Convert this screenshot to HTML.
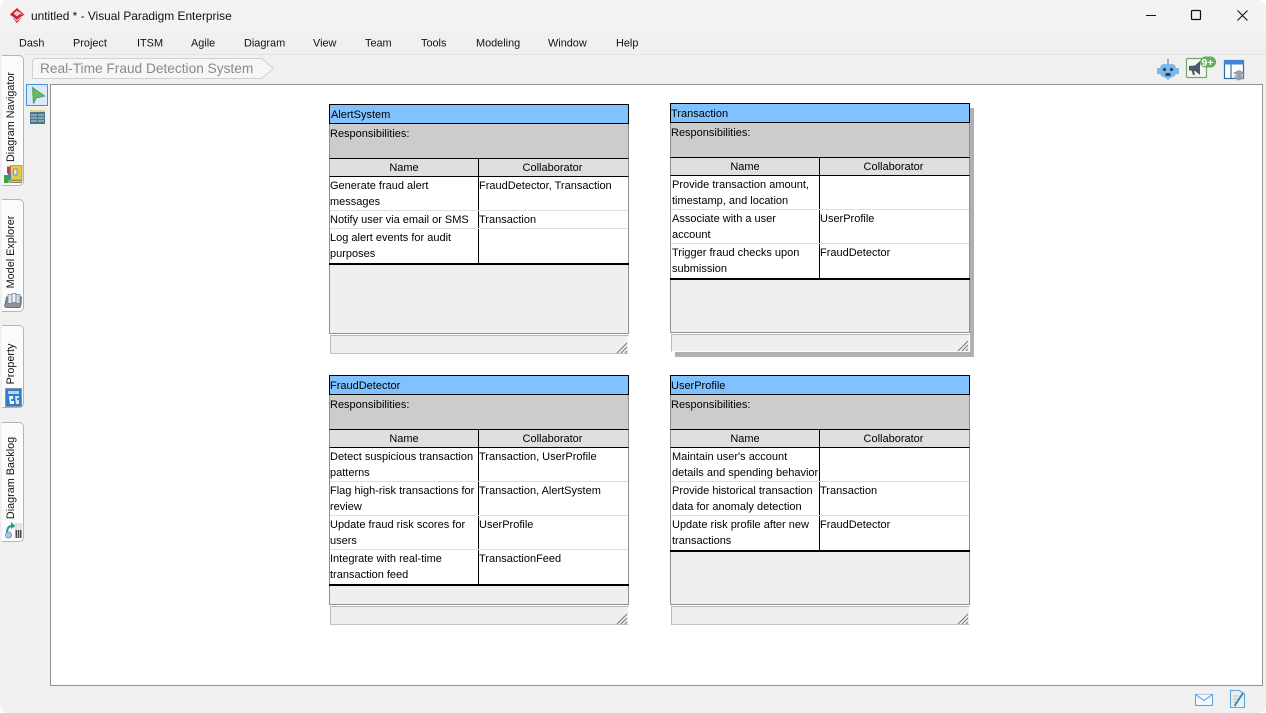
<!DOCTYPE html>
<html><head><meta charset="utf-8"><style>
html,body{margin:0;padding:0;width:1266px;height:713px;overflow:hidden;background:#fff}
*{box-sizing:border-box}
body{font-family:"Liberation Sans",sans-serif;position:relative}
#win{position:absolute;left:0;top:0;width:1266px;height:713px;background:#f0f0f0;border-radius:8px 8px 8px 8px;overflow:hidden}
.a{position:absolute;white-space:nowrap}
#tb{position:absolute;left:0;top:0;width:1266px;height:31px;background:#f3f3f3}
.m{position:absolute;top:37px;font-size:10.900px;line-height:13px;color:#111;white-space:nowrap;transform:translateY(.6px)}
.tab{position:absolute;left:2px;width:22px;background:#fbfbfb;border:1px solid #b4b4b4;border-left:none;border-radius:0 5px 5px 0}
.v{position:absolute;left:10.500px;font-size:10.800px;line-height:14px;color:#111;white-space:nowrap;transform:translate(-50%,-50%) rotate(-90deg)}
#canvas{position:absolute;left:50px;top:84px;width:1213px;height:602px;background:#fff;border:1px solid #8e929a}
.c{position:absolute;width:300px;height:250px;font-size:11px;line-height:16px;color:#000}
.c div{position:absolute}
.h{left:0;top:0;width:300px;height:20px;background:#80c1ff;border:1px solid #000;line-height:20px}
.r{left:0;top:20px;width:300px;height:34px;background:#ccc;border-left:1px solid #8a8f9a;border-right:1px solid #8a8f9a;line-height:20px}
.n{left:0;top:54px;width:150px;height:19px;background:#dfdfdf;border:1px solid #000;border-left-color:#8a8f9a;text-align:center;line-height:19px}
.o{left:149px;top:54px;width:151px;height:19px;background:#dfdfdf;border:1px solid #000;border-right-color:#8a8f9a;text-align:center;line-height:19px;padding-right:2px}
.b{left:0;top:73px;width:300px;background:#fff;border-left:1px solid #8a8f9a;border-right:1px solid #8a8f9a}
.vl{left:149px;top:73px;width:1px;background:#000}
.l{left:1px;width:298px;height:1px;background:#ddd}
.k{left:0;width:300px;height:2px;background:#000}
.g{left:0;width:300px;background:#efefef;border:1px solid #8a8f9a;border-top:none}
.f{left:1px;top:231px;width:299px;height:19px;background:#efefef;border:1px solid #b8b8b8;border-right:1px solid #fff;border-bottom:1px solid #c4c4c4}
.t{left:2px;width:146px;white-space:nowrap;margin-top:1px}
.left .t{left:1px}
.u{left:150px;white-space:nowrap;margin-top:1px}
.s{background:#b0b0b0}
</style></head><body>
<div id="win">
<div id="tb"></div>

<!-- logo -->
<svg class="a" style="left:9px;top:7px" width="16" height="17" viewBox="0 0 16 17"><path d="M8 1L15 7.500L8 16L1 7.500Z" fill="#c8232c"/><path d="M4.500 6.500L8 3.500L11.500 6.500L8 9.500Z" fill="#f6c4c4"/><path d="M2.500 9L8 13.500L13.500 9" stroke="#f8e0e0" stroke-width=".9" fill="none"/><path d="M10 5L13 8" stroke="#f8e0e0" stroke-width=".7"/></svg>
<div class="a" style="left:31px;top:9px;font-size:11.900px;line-height:14px;color:#111">untitled * - Visual Paradigm Enterprise</div>

<!-- window buttons -->
<svg class="a" style="left:1140px;top:5px" width="115" height="22" viewBox="0 0 115 22" fill="none" stroke="#111"><path d="M6 10.500H16" stroke-width="1.100"/><rect x="51.500" y="5.500" width="9" height="9" rx="1" stroke-width="1.200"/><path d="M97.500 5.500L107.500 15.500M107.500 5.500L97.500 15.500" stroke-width="1.100"/></svg>

<!-- menu -->
<div class="m" style="left:19px">Dash</div>
<div class="m" style="left:73px">Project</div>
<div class="m" style="left:137px">ITSM</div>
<div class="m" style="left:191px">Agile</div>
<div class="m" style="left:244px">Diagram</div>
<div class="m" style="left:313px">View</div>
<div class="m" style="left:365px">Team</div>
<div class="m" style="left:421px">Tools</div>
<div class="m" style="left:476px">Modeling</div>
<div class="m" style="left:548px">Window</div>
<div class="m" style="left:616px">Help</div>

<div class="a" style="left:24px;top:54px;width:1242px;height:1px;background:#e2e2e2"></div>

<!-- breadcrumb -->
<svg class="a" style="left:32px;top:58px" width="243" height="22" viewBox="0 0 243 22"><path d="M2.500 .5H229.500L241.500 10.500L229.500 20.500H.5V2.500Z" fill="#f6f6f6" stroke="#d0d0d0"/></svg>
<div class="a" style="left:40px;top:61px;font-size:13.700px;line-height:16px;color:#8a8a8a">Real-Time Fraud Detection System</div>

<!-- top-right icons -->
<svg class="a" style="left:1155px;top:58px" width="26" height="24" viewBox="0 0 26 24"><path d="M13 1V6" stroke="#6f9fcf" stroke-width="1.600"/><rect x="5" y="6" width="16" height="13" rx="4" fill="#7db8ec"/><rect x="2" y="10" width="3" height="6" fill="#7db8ec"/><rect x="21" y="10" width="3" height="6" fill="#7db8ec"/><circle cx="9.500" cy="11.500" r="1.600" fill="#29415f"/><circle cx="16.500" cy="11.500" r="1.600" fill="#29415f"/><path d="M10.500 15H15.500V18H10.500Z" fill="#29415f"/><path d="M9 19H17L13 22Z" fill="#7db8ec"/></svg>
<svg class="a" style="left:1185px;top:56px" width="32" height="24" viewBox="0 0 32 24"><rect x="1.500" y="2.500" width="20" height="19" rx="1" fill="#f4f6f4" stroke="#6fa86a" stroke-width="1.200"/><path d="M4 10L10 9.500L15 5V19L10 15L9 15L10 19H8L6.500 14.500H4Z" fill="#4a5868"/><rect x="15" y="0.500" width="16" height="11" rx="5.500" fill="#62b05a"/><text x="16.500" y="9.800" font-size="10.500" font-weight="bold" font-family="Liberation Sans" fill="#fff">9+</text></svg>
<svg class="a" style="left:1223px;top:59px" width="24" height="22" viewBox="0 0 24 22"><rect x="1.500" y="1.500" width="19" height="18" fill="#fff" stroke="#2f6f9f" stroke-width="1.200"/><rect x="1" y="1" width="20" height="4.500" fill="#3f86d6"/><path d="M8 5.500V19" stroke="#2f6f9f" stroke-width="1.200"/><path d="M11 14L16 11.500L21 14L16 16.500Z M11 16.500L16 19L21 16.500 M11 18.500L16 21L21 18.500" fill="#9aa3ad" stroke="#8a939d" stroke-width=".8"/></svg>

<!-- left tabs -->
<div class="tab" style="top:55px;height:131px"></div>
<div class="tab" style="top:199px;height:113px"></div>
<div class="tab" style="top:325px;height:83px"></div>
<div class="tab" style="top:422px;height:120px"></div>
<div class="v" style="top:116.500px">Diagram Navigator</div>
<div class="v" style="top:251.500px">Model Explorer</div>
<div class="v" style="top:363.500px">Property</div>
<div class="v" style="top:477.500px">Diagram Backlog</div>

<svg class="a" style="left:3px;top:164px" width="20" height="20" viewBox="0 0 20 20"><path d="M3 15L7 19H19V15Z" fill="#8f8450"/><path d="M5 15L8 17.500H19" stroke="#d8cc80" fill="none"/><rect x="7.500" y="1.500" width="11.500" height="14.500" fill="#e2cb48" stroke="#a8963a" stroke-width=".8"/><rect x="10.500" y="5" width="3.500" height="6" fill="#dfe6ee" stroke="#5a7898" stroke-width=".7"/><rect x="4" y="2.500" width="3.500" height="7" fill="#c53a5a"/><rect x="5" y="9.500" width="3" height="6" fill="#3f7fc8"/><rect x="1" y="11" width="4.500" height="8" fill="#3aa640"/></svg>
<svg class="a" style="left:3px;top:292px" width="20" height="17" viewBox="0 0 20 17"><path d="M1.500 14.500L3.500 5H18.500L18 13L17 15.500H3Z" fill="#8a949e" stroke="#555" stroke-width=".7"/><rect x="5" y="2.500" width="4" height="9" fill="#dfe6ee" stroke="#607080" stroke-width=".6"/><rect x="9" y="1.500" width="4" height="9" fill="#eef2f6" stroke="#607080" stroke-width=".6"/><rect x="13" y="2.500" width="4" height="9" fill="#cfd8e2" stroke="#607080" stroke-width=".6"/></svg>
<svg class="a" style="left:5px;top:388px" width="17" height="19" viewBox="0 0 17 19"><rect x=".5" y=".5" width="16" height="18" fill="#2f7fd0" stroke="#8a949e"/><rect x="3" y="3" width="11" height="3" fill="#bcd2e6"/><path d="M4 8H8V11H6V13H9V16H5Z" fill="#fff"/><path d="M10 8H14V10H12V12H14V16H11Z" fill="#d8e4f0"/></svg>
<svg class="a" style="left:4px;top:521px" width="19" height="18" viewBox="0 0 19 18"><path d="M3 12C3 7 5 5 8 5" stroke="#2a9a90" stroke-width="2" fill="none"/><path d="M7 1L11.500 5L7 8Z" fill="#2a9a90"/><circle cx="4.500" cy="14" r="3" fill="#a8c8e8" stroke="#6a98c8"/><rect x="11" y="2" width="7" height="7" fill="#dedede"/><path d="M11.500 9H17.500V17H11.500Z" fill="#4a4a4a"/><path d="M13.500 2V17M15.500 2V17" stroke="#f0f0f0" stroke-width=".7"/></svg>

<!-- palette -->
<div class="a" style="left:26px;top:84px;width:22px;height:22px;background:#dbeaf6;border:1px solid #3d96dc"></div>
<svg class="a" style="left:26px;top:84px" width="22" height="22" viewBox="0 0 22 22"><path d="M6.500 3.500L18.500 12L10 14L7.500 19.500Z" fill="#5cc05c" stroke="#5f8f6f" stroke-width="1"/></svg>
<svg class="a" style="left:30px;top:110px" width="15" height="14" viewBox="0 0 15 14"><rect x="0" y="0" width="15" height="14" fill="#4a7888"/><rect x="0" y="0" width="15" height="2" fill="#e0d68a"/><path d="M1 5H14M1 8H14M1 11H14" stroke="#c8d4d8" stroke-width="1.100"/><path d="M7.500 4V13" stroke="#4a7888"/></svg>

<div id="canvas"></div>

<!-- AlertSystem -->
<div class="c left" style="left:329px;top:104px">
<div class="h" style="padding-left:1px">AlertSystem</div><div class="r">Responsibilities:</div>
<div class="b" style="height:87px"></div><div class="n">Name</div><div class="o">Collaborator</div>
<div class="vl" style="height:86px"></div>
<div class="l" style="top:106px"></div><div class="l" style="top:124px"></div>
<div class="t" style="top:73px">Generate fraud alert<br>messages</div><div class="u" style="top:73px">FraudDetector, Transaction</div>
<div class="t" style="top:107px">Notify user via email or SMS</div><div class="u" style="top:107px">Transaction</div>
<div class="t" style="top:125px">Log alert events for audit<br>purposes</div>
<div class="k" style="top:159px"></div><div class="g" style="top:161px;height:69px"></div>
<div class="f"></div>
<svg style="position:absolute;left:287px;top:238px" width="12" height="12" viewBox="0 0 12 12" stroke="#777" fill="none"><path d="M1 11L11 1M5 11L11 5M9 11L11 9"/></svg>
</div>

<!-- Transaction -->
<div class="a s" style="left:970px;top:108px;width:4px;height:249px"></div>
<div class="a s" style="left:675px;top:352px;width:299px;height:5px"></div>
<div class="c" style="left:670px;top:103px">
<div class="h">Transaction</div><div class="r">Responsibilities:</div>
<div class="b" style="height:103px"></div><div class="n">Name</div><div class="o">Collaborator</div>
<div class="vl" style="height:102px"></div>
<div class="l" style="top:106px"></div><div class="l" style="top:140px"></div>
<div class="t" style="top:73px">Provide transaction amount,<br>timestamp, and location</div>
<div class="t" style="top:107px">Associate with a user<br>account</div><div class="u" style="top:107px">UserProfile</div>
<div class="t" style="top:141px">Trigger fraud checks upon<br>submission</div><div class="u" style="top:141px">FraudDetector</div>
<div class="k" style="top:175px"></div><div class="g" style="top:177px;height:53px"></div>
<div class="f" style="height:18px;border-bottom-color:#fff"></div>
<svg style="position:absolute;left:287px;top:237px" width="12" height="12" viewBox="0 0 12 12" stroke="#777" fill="none"><path d="M1 11L11 1M5 11L11 5M9 11L11 9"/></svg>
</div>

<!-- FraudDetector -->
<div class="c left" style="left:329px;top:375px">
<div class="h">FraudDetector</div><div class="r">Responsibilities:</div>
<div class="b" style="height:136px"></div><div class="n">Name</div><div class="o">Collaborator</div>
<div class="vl" style="height:136px"></div>
<div class="l" style="top:106px"></div><div class="l" style="top:140px"></div><div class="l" style="top:174px"></div>
<div class="t" style="top:73px">Detect suspicious transaction<br>patterns</div><div class="u" style="top:73px">Transaction, UserProfile</div>
<div class="t" style="top:107px">Flag high-risk transactions for<br>review</div><div class="u" style="top:107px">Transaction, AlertSystem</div>
<div class="t" style="top:141px">Update fraud risk scores for<br>users</div><div class="u" style="top:141px">UserProfile</div>
<div class="t" style="top:175px">Integrate with real-time<br>transaction feed</div><div class="u" style="top:175px">TransactionFeed</div>
<div class="k" style="top:209px"></div><div class="g" style="top:211px;height:19px"></div>
<div class="f"></div>
<svg style="position:absolute;left:287px;top:238px" width="12" height="12" viewBox="0 0 12 12" stroke="#777" fill="none"><path d="M1 11L11 1M5 11L11 5M9 11L11 9"/></svg>
</div>

<!-- UserProfile -->
<div class="c" style="left:670px;top:375px">
<div class="h">UserProfile</div><div class="r">Responsibilities:</div>
<div class="b" style="height:103px"></div><div class="n">Name</div><div class="o">Collaborator</div>
<div class="vl" style="height:102px"></div>
<div class="l" style="top:106px"></div><div class="l" style="top:140px"></div>
<div class="t" style="top:73px">Maintain user's account<br>details and spending behavior</div>
<div class="t" style="top:107px">Provide historical transaction<br>data for anomaly detection</div><div class="u" style="top:107px">Transaction</div>
<div class="t" style="top:141px">Update risk profile after new<br>transactions</div><div class="u" style="top:141px">FraudDetector</div>
<div class="k" style="top:175px"></div><div class="g" style="top:177px;height:53px"></div>
<div class="f"></div>
<svg style="position:absolute;left:287px;top:238px" width="12" height="12" viewBox="0 0 12 12" stroke="#777" fill="none"><path d="M1 11L11 1M5 11L11 5M9 11L11 9"/></svg>
</div>

<!-- status icons -->
<svg class="a" style="left:1194px;top:693px" width="20" height="14" viewBox="0 0 20 14" fill="#f4f8fc" stroke="#62a4e0" stroke-width="1.100"><rect x="1.500" y="1.500" width="17" height="11"/><path d="M1.500 1.500L10 7.500L18.500 1.500"/></svg>
<svg class="a" style="left:1229px;top:689px" width="17" height="20" viewBox="0 0 17 20"><path d="M1.500 1.500H10.500L15.500 5V18.500H1.500Z" fill="#eceff2" stroke="#62a4e0" stroke-width="1.100"/><path d="M4 7H10M4 10H9M4 13H8" stroke="#bbb"/><path d="M5.500 17L14 4" stroke="#1f8fa8" stroke-width="1.800"/></svg>
</div>
</body></html>
